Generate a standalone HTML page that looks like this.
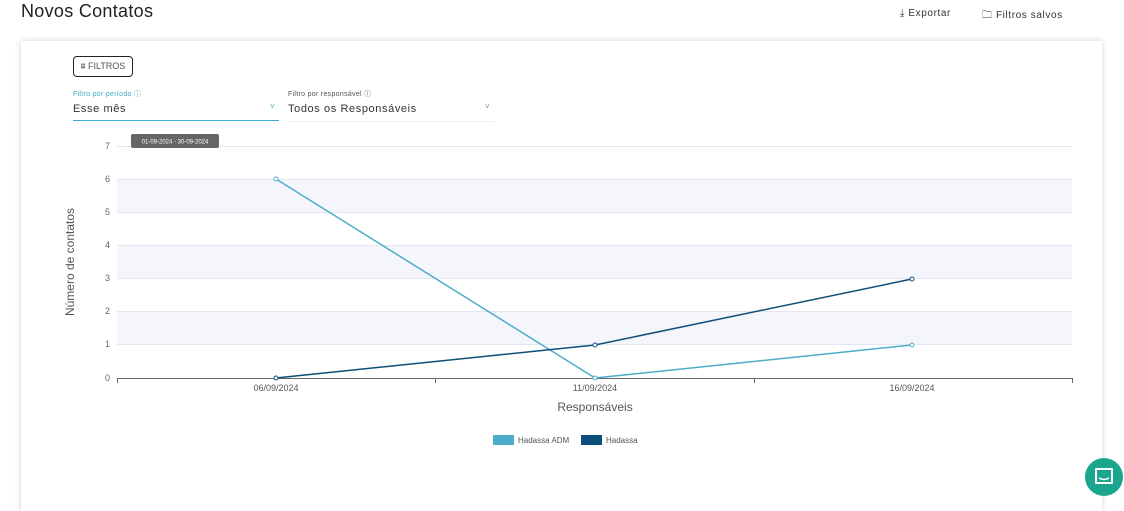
<!DOCTYPE html>
<html><head><meta charset="utf-8"><style>
body{margin:0;width:1124px;height:502px;background:#fff;font-family:"Liberation Sans",sans-serif;position:relative;overflow:hidden}
.t{position:absolute;left:21px;top:1px;font-size:18px;color:#222;letter-spacing:.3px}
.card{position:absolute;left:21px;top:41px;width:1081px;height:470px;background:#fff;box-shadow:0 0 6px rgba(0,0,0,.18)}
.a{position:absolute;font-size:10px;color:#333;letter-spacing:.6px}
</style></head><body>
<div class="t">Novos Contatos</div>
<div class="a" style="left:900px;top:8px">⤓ Exportar</div>
<div class="a" style="left:982px;top:8px">🗀 Filtros salvos</div>
<div class="card"></div>
<div style="position:absolute;left:73px;top:56px;width:58px;height:19px;border:1px solid #222;border-radius:4px;font-size:9px;color:#555;line-height:19px;text-align:center">⩩ FILTROS</div>
<div style="position:absolute;left:73px;top:89px;font-size:7px;color:#3aaac8;letter-spacing:.3px">Filtro por período ⓘ</div>
<div style="position:absolute;left:73px;top:103px;font-size:11px;color:#333;letter-spacing:.6px">Esse mês</div>
<div style="position:absolute;left:270px;top:102px;font-size:8px;color:#3aaac8">˅</div>
<div style="position:absolute;left:73px;top:120px;width:206px;height:1px;background:#3aaac8"></div>
<div style="position:absolute;left:288px;top:89px;font-size:7px;color:#555;letter-spacing:.3px">Filtro por responsável ⓘ</div>
<div style="position:absolute;left:288px;top:103px;font-size:11px;color:#333;letter-spacing:.6px">Todos os Responsáveis</div>
<div style="position:absolute;left:485px;top:102px;font-size:8px;color:#888">˅</div>
<div style="position:absolute;left:288px;top:121px;width:206px;height:1px;background:#eee"></div>
<svg style="position:absolute;left:0;top:0" width="1124" height="502" font-family="Liberation Sans,sans-serif">
<rect x="117" y="179" width="955" height="33" fill="#f5f6fb"/>
<rect x="117" y="245" width="955" height="33" fill="#f5f6fb"/>
<rect x="117" y="311" width="955" height="33" fill="#f5f6fb"/>
<g stroke="#e3e6f0" stroke-width="1">
<line x1="117" y1="146.5" x2="1072" y2="146.5"/><line x1="117" y1="179.5" x2="1072" y2="179.5"/><line x1="117" y1="212.5" x2="1072" y2="212.5"/><line x1="117" y1="245.5" x2="1072" y2="245.5"/><line x1="117" y1="278.5" x2="1072" y2="278.5"/><line x1="117" y1="311.5" x2="1072" y2="311.5"/><line x1="117" y1="344.5" x2="1072" y2="344.5"/></g>
<line x1="117" y1="378.5" x2="1072" y2="378.5" stroke="#666"/>
<g stroke="#666"><line x1="117.5" y1="378" x2="117.5" y2="383"/><line x1="435.5" y1="378" x2="435.5" y2="383"/><line x1="754.5" y1="378" x2="754.5" y2="383"/><line x1="1072.5" y1="378" x2="1072.5" y2="383"/></g>
<g font-size="9" fill="#666" text-anchor="end"><text x="110" y="149">7</text><text x="110" y="182">6</text><text x="110" y="215">5</text><text x="110" y="248">4</text><text x="110" y="281">3</text><text x="110" y="314">2</text><text x="110" y="347">1</text><text x="110" y="381">0</text></g>
<g font-size="9" fill="#555" text-anchor="middle"><text x="276" y="391">06/09/2024</text><text x="595" y="391">11/09/2024</text><text x="912" y="391">16/09/2024</text></g>
<text x="595" y="411" font-size="12" fill="#555" text-anchor="middle">Responsáveis</text>
<text transform="translate(74,262) rotate(-90)" font-size="12" fill="#555" text-anchor="middle">Número de contatos</text>
<polyline points="276,179 595,378 912,345" fill="none" stroke="#4badc9" stroke-width="1.5"/>
<polyline points="276,378 595,345 912,279" fill="none" stroke="#0d4f78" stroke-width="1.5"/>
<g fill="#fff" stroke="#4badc9"><circle cx="276" cy="179" r="2"/><circle cx="595" cy="378" r="2"/><circle cx="912" cy="345" r="2"/></g>
<g fill="#fff" stroke="#0d4f78"><circle cx="276" cy="378" r="2"/><circle cx="595" cy="345" r="2"/><circle cx="912" cy="279" r="2"/></g>
<rect x="493" y="435" width="21" height="10" fill="#4badc9"/><text x="518" y="443" font-size="8" fill="#555">Hadassa ADM</text>
<rect x="581" y="435" width="21" height="10" fill="#0d4f78"/><text x="606" y="443" font-size="8" fill="#555">Hadassa</text>
<rect x="131" y="134" width="88" height="14" rx="2" fill="#666"/><text x="175" y="143.5" font-size="6" fill="#fff" text-anchor="middle">01-09-2024 - 30-09-2024</text>
<circle cx="1104" cy="477" r="19" fill="#1aa68e"/>
<path d="M1096 469h16v14h-16z" fill="none" stroke="#fff" stroke-width="2" stroke-linejoin="round"/>
<path d="M1099 478q5 3 10 0" fill="none" stroke="#fff" stroke-width="1.5"/>
</svg>
</body></html>
